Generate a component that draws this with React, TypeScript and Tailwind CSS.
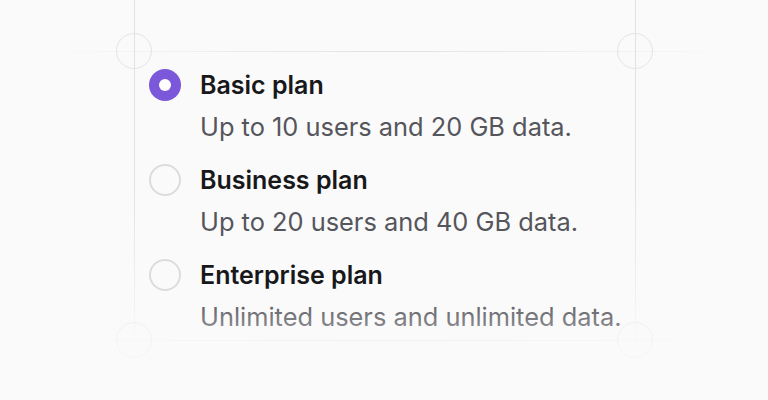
import React from "react";

const plans = [
  { name: "Basic plan", desc: "Up to 10 users and 20 GB data.", checked: true },
  { name: "Business plan", desc: "Up to 20 users and 40 GB data.", checked: false },
  { name: "Enterprise plan", desc: "Unlimited users and unlimited data.", checked: false },
];

function Radio({ checked }: { checked: boolean }) {
  if (checked) {
    return (
      <span className="flex h-8 w-8 shrink-0 items-center justify-center rounded-full bg-[#7b57d9]">
        <span className="h-3 w-3 rounded-full bg-white" />
      </span>
    );
  }
  return <span className="h-8 w-8 shrink-0 rounded-full border-2 border-[#dcdcdf] bg-[#fafafa]" />;
}

export default function App() {
  return (
    <div
      className="relative h-[400px] w-[768px] overflow-hidden bg-[#fafafa]"
      style={{ fontFamily: "Inter, 'Noto Sans', sans-serif" }}
    >
      {/* decorative grid */}
      <div className="pointer-events-none absolute left-[40px] top-[51px] h-px w-[700px] bg-gradient-to-r from-transparent via-[#e2e2e2] to-transparent" />
      <div className="pointer-events-none absolute left-[40px] top-[340px] h-px w-[700px] bg-gradient-to-r from-transparent via-[#e6e6e6] to-transparent" />
      <div className="pointer-events-none absolute left-[134px] top-0 h-[370px] w-px bg-gradient-to-b from-[#e2e2e2] via-[#e2e2e2] to-transparent" />
      <div className="pointer-events-none absolute left-[635px] top-0 h-[370px] w-px bg-gradient-to-b from-[#e2e2e2] via-[#e2e2e2] to-transparent" />
      <div className="pointer-events-none absolute left-[116px] top-[33px] h-9 w-9 rounded-full border border-[#e4e4e4]" />
      <div className="pointer-events-none absolute left-[617px] top-[33px] h-9 w-9 rounded-full border border-[#e4e4e4]" />
      <div className="pointer-events-none absolute left-[116px] top-[322px] h-9 w-9 rounded-full border border-[#ececec]" />
      <div className="pointer-events-none absolute left-[617px] top-[322px] h-9 w-9 rounded-full border border-[#ececec]" />

      <div className="relative flex flex-col gap-[21px] pl-[149px] pt-[69px]">
        {plans.map((p) => (
          <div key={p.name} className="flex items-start gap-[19px]">
            <Radio checked={p.checked} />
            <div className="flex flex-col gap-[10px]">
              <div className="text-[25px] font-semibold leading-[32px] text-[#18181b]">{p.name}</div>
              <div className="text-[25.4px] leading-[32px] text-[#55555c]">{p.desc}</div>
            </div>
          </div>
        ))}
      </div>

      <div
        className="pointer-events-none absolute left-0 top-[296px] h-[104px] w-full"
        style={{
          background:
            "linear-gradient(to bottom, rgba(250,250,250,0) 0px, rgba(250,250,250,0.3) 30px, rgba(250,250,250,0.65) 60px, rgba(250,250,250,1) 95px)",
        }}
      />
    </div>
  );
}
